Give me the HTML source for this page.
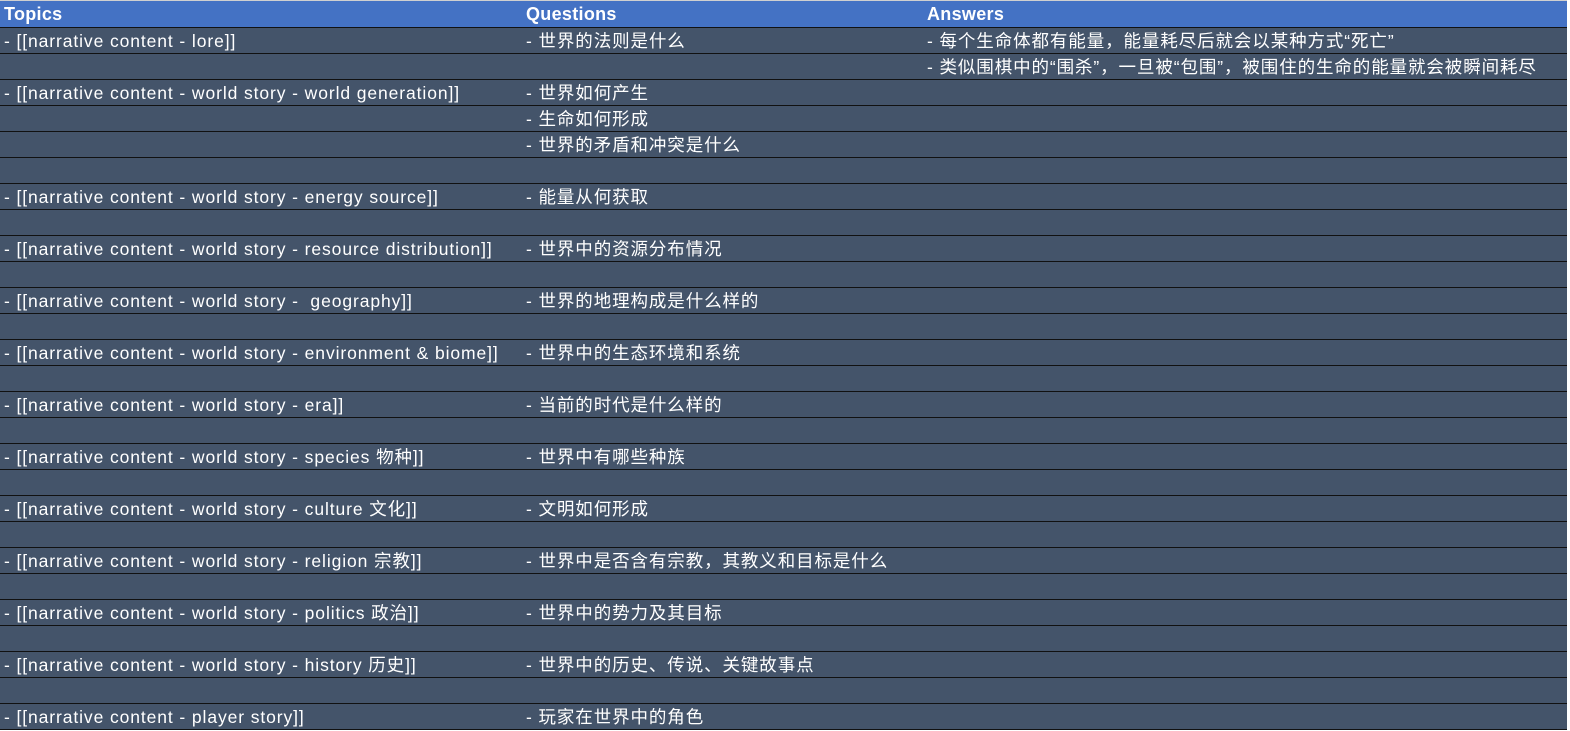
<!DOCTYPE html>
<html><head><meta charset="utf-8"><style>
body{margin:0;width:1570px;height:730px;background:#fff;overflow:hidden;font-family:"Liberation Sans","Noto Sans CJK SC",sans-serif;}
#t{position:absolute;left:0;top:0;width:1567px;height:730px;background:#44546A;border-top:1px solid #d0d0d0;box-sizing:border-box}
.r{position:absolute;left:0;width:1567px;height:26px;border-bottom:1px solid #111;box-sizing:border-box;color:#fff;font-size:17.5px;letter-spacing:0.9px;line-height:27px;white-space:nowrap}
.h{background:#4472C4;font-weight:bold;font-size:18px;letter-spacing:0.3px}
.r span{position:absolute;top:0}
.a{left:4px}.b{left:526px}.c{left:927px}
</style></head><body><div id="t">
<div class="r h" style="top:0;height:27px"><span class="a">Topics</span><span class="b">Questions</span><span class="c">Answers</span></div>
<div class="r" style="top:27px"><span class="a">- [[narrative content - lore]]</span><span class="b">- 世界的法则是什么</span><span class="c">- 每个生命体都有能量，能量耗尽后就会以某种方式“死亡”</span></div>
<div class="r" style="top:53px"><span class="c">- 类似围棋中的“围杀”，一旦被“包围”，被围住的生命的能量就会被瞬间耗尽</span></div>
<div class="r" style="top:79px"><span class="a">- [[narrative content - world story - world generation]]</span><span class="b">- 世界如何产生</span></div>
<div class="r" style="top:105px"><span class="b">- 生命如何形成</span></div>
<div class="r" style="top:131px"><span class="b">- 世界的矛盾和冲突是什么</span></div>
<div class="r" style="top:157px"></div>
<div class="r" style="top:183px"><span class="a">- [[narrative content - world story - energy source]]</span><span class="b">- 能量从何获取</span></div>
<div class="r" style="top:209px"></div>
<div class="r" style="top:235px"><span class="a">- [[narrative content - world story - resource distribution]]</span><span class="b">- 世界中的资源分布情况</span></div>
<div class="r" style="top:261px"></div>
<div class="r" style="top:287px"><span class="a">- [[narrative content - world story -&nbsp; geography]]</span><span class="b">- 世界的地理构成是什么样的</span></div>
<div class="r" style="top:313px"></div>
<div class="r" style="top:339px"><span class="a">- [[narrative content - world story - environment &amp; biome]]</span><span class="b">- 世界中的生态环境和系统</span></div>
<div class="r" style="top:365px"></div>
<div class="r" style="top:391px"><span class="a">- [[narrative content - world story - era]]</span><span class="b">- 当前的时代是什么样的</span></div>
<div class="r" style="top:417px"></div>
<div class="r" style="top:443px"><span class="a">- [[narrative content - world story - species 物种]]</span><span class="b">- 世界中有哪些种族</span></div>
<div class="r" style="top:469px"></div>
<div class="r" style="top:495px"><span class="a">- [[narrative content - world story - culture 文化]]</span><span class="b">- 文明如何形成</span></div>
<div class="r" style="top:521px"></div>
<div class="r" style="top:547px"><span class="a">- [[narrative content - world story - religion 宗教]]</span><span class="b">- 世界中是否含有宗教，其教义和目标是什么</span></div>
<div class="r" style="top:573px"></div>
<div class="r" style="top:599px"><span class="a">- [[narrative content - world story - politics 政治]]</span><span class="b">- 世界中的势力及其目标</span></div>
<div class="r" style="top:625px"></div>
<div class="r" style="top:651px"><span class="a">- [[narrative content - world story - history 历史]]</span><span class="b">- 世界中的历史、传说、关键故事点</span></div>
<div class="r" style="top:677px"></div>
<div class="r" style="top:703px"><span class="a">- [[narrative content - player story]]</span><span class="b">- 玩家在世界中的角色</span></div>
</div></body></html>
